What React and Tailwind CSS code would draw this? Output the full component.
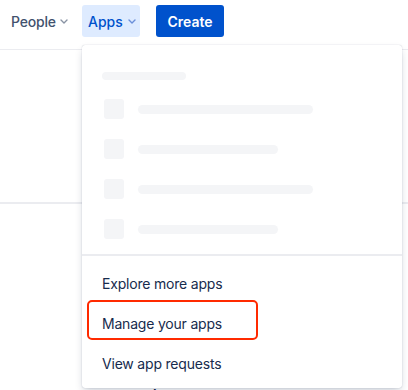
import React from "react";

function Chevron({ color }) {
  return (
    <svg width="8" height="5" viewBox="0 0 8 5" fill="none">
      <path d="M1 1l3 3 3-3" stroke={color} strokeWidth="1.4" strokeLinecap="round" strokeLinejoin="round" />
    </svg>
  );
}

export default function App() {
  const rows = [175, 140, 175, 140];
  return (
    <div className="relative w-[408px] h-[390px] overflow-hidden bg-white font-['Inter',sans-serif]">
      <header className="h-[50px] border-b border-[#EBECF0] flex items-start pt-[5px] pl-[5px]">
        <button className="w-[69px] h-[32px] px-[6px] flex items-center gap-[4px] rounded-[3px] text-[14px] font-medium tracking-[-0.2px] text-[#42526E]">
          People <Chevron color="#8993A4" />
        </button>
        <button className="ml-[8px] h-[32px] w-[58px] pl-[6px] flex items-center gap-[5px] rounded-[3px] bg-[#DEEBFF] text-[14px] font-medium text-[#0052CC]">
          Apps <Chevron color="#6B8FD9" />
        </button>
        <button className="ml-[16px] h-[32px] w-[68px] flex items-center justify-center rounded-[3px] bg-[#0052CC] text-[14px] font-semibold text-white">
          Create
        </button>
      </header>
      <div className="mt-[152px] border-t-2 border-[#EBECF0]"></div>
      <div className="mt-[180px] pl-[150px] text-[14px] text-[#172B4D]">Apps</div>

      <div className="absolute left-[82px] top-[45px] w-[320px] h-[343px] bg-white rounded-[3px] shadow-[0_4px_8px_-2px_rgba(9,30,66,0.25),0_0_1px_rgba(9,30,66,0.31)]">
        <div className="pt-[27px] pl-[20px]">
          <div className="w-[84px] h-[8px] rounded-full bg-[#F4F5F7]"></div>
        </div>
        <div className="pt-[19px] pl-[22px] flex flex-col gap-[20px]">
          {rows.map((w, i) => (
            <div key={i} className="flex items-center gap-[14px] h-[20px]">
              <div className="w-[20px] h-[20px] rounded-[3px] bg-[#F4F5F7]"></div>
              <div className="h-[9px] rounded-full bg-[#F4F5F7]" style={{ width: w }}></div>
            </div>
          ))}
        </div>
        <div className="mt-[15px] border-t-2 border-[#EBECF0]"></div>
        <div className="pt-[7px] text-[14px] tracking-[-0.2px] text-[#172B4D]">
          <div className="h-[40px] flex items-center pl-[20px]">Explore more apps</div>
          <div className="h-[40px] flex items-center pl-[20px]">Manage your apps</div>
          <div className="h-[40px] flex items-center pl-[20px]">View app requests</div>
        </div>
        <div className="absolute left-[5px] top-[255px] w-[171px] h-[40px] border-2 border-[#FF2A00] rounded-[5px]"></div>
      </div>
    </div>
  );
}
